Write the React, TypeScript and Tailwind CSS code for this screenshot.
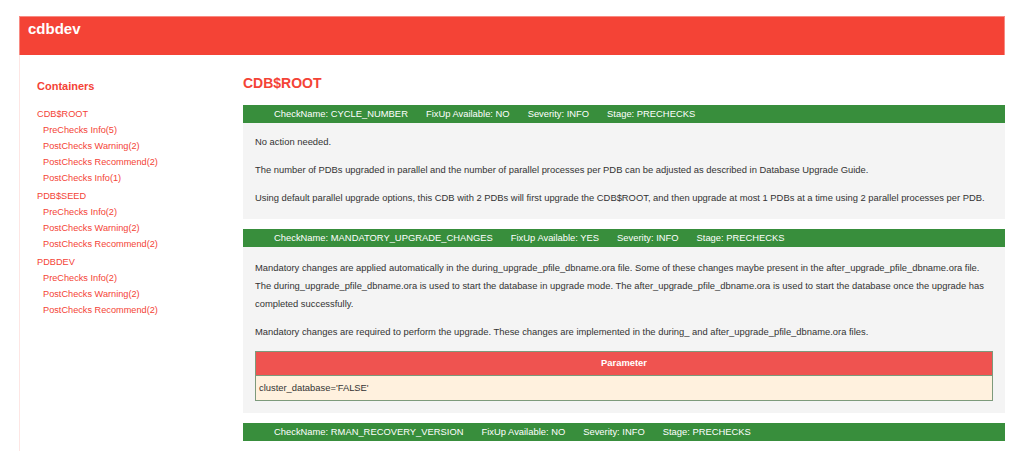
import React from 'react'

type Check = {
  name: string
  fixup: string
  severity: string
  stage: string
  paragraphs?: string[]
  params?: string[]
}

const checks: Check[] = [
  {
    name: 'CYCLE_NUMBER',
    fixup: 'NO',
    severity: 'INFO',
    stage: 'PRECHECKS',
    paragraphs: [
      'No action needed.',
      'The number of PDBs upgraded in parallel and the number of parallel processes per PDB can be adjusted as described in Database Upgrade Guide.',
      'Using default parallel upgrade options, this CDB with 2 PDBs will first upgrade the CDB$ROOT, and then upgrade at most 1 PDBs at a time using 2 parallel processes per PDB.',
    ],
  },
  {
    name: 'MANDATORY_UPGRADE_CHANGES',
    fixup: 'YES',
    severity: 'INFO',
    stage: 'PRECHECKS',
    paragraphs: [
      'Mandatory changes are applied automatically in the during_upgrade_pfile_dbname.ora file. Some of these changes maybe present in the after_upgrade_pfile_dbname.ora file. The during_upgrade_pfile_dbname.ora is used to start the database in upgrade mode. The after_upgrade_pfile_dbname.ora is used to start the database once the upgrade has completed successfully.',
      'Mandatory changes are required to perform the upgrade. These changes are implemented in the during_ and after_upgrade_pfile_dbname.ora files.',
    ],
    params: ["cluster_database='FALSE'"],
  },
  {
    name: 'RMAN_RECOVERY_VERSION',
    fixup: 'NO',
    severity: 'INFO',
    stage: 'PRECHECKS',
  },
]

const containers = [
  { name: 'CDB$ROOT', items: ['PreChecks Info(5)', 'PostChecks Warning(2)', 'PostChecks Recommend(2)', 'PostChecks Info(1)'] },
  { name: 'PDB$SEED', items: ['PreChecks Info(2)', 'PostChecks Warning(2)', 'PostChecks Recommend(2)'] },
  { name: 'PDBDEV', items: ['PreChecks Info(2)', 'PostChecks Warning(2)', 'PostChecks Recommend(2)'] },
]

function CheckCard({ check }: { check: Check }) {
  const hasTable = !!check.params
  return (
    <div className="mb-[10px]">
      {/* green title bar */}
      <div className="h-[18px] bg-[#388e3c] text-white text-[9.4px] flex items-center gap-[18px] pl-[31px]">
        <span>CheckName: {check.name}</span>
        <span>FixUp Available: {check.fixup}</span>
        <span>Severity: {check.severity}</span>
        <span>Stage: {check.stage}</span>
      </div>
      {check.paragraphs && (
        <div className={`bg-[#f4f4f4] px-[12px] text-[9.4px] text-[#333] ${hasTable ? 'pt-[12px] pb-[12px]' : 'pt-[10px] pb-[12px]'}`}>
          {check.paragraphs.map((p, i) => (
            <p key={i} className={`leading-[18px] ${i < check.paragraphs!.length - 1 || hasTable ? 'mb-[10px]' : ''}`}>
              {p}
            </p>
          ))}
          {hasTable && (
            <table className="w-full border-collapse border border-[#7d9a7b]">
              <thead>
                <tr>
                  <th className="h-[24px] bg-[#ef5350] text-white font-bold text-center border border-[#7d9a7b]">Parameter</th>
                </tr>
              </thead>
              <tbody>
                {check.params!.map((prm) => (
                  <tr key={prm}>
                    <td className="h-[25px] bg-[#fff1de] px-[3px] text-left border border-[#7d9a7b]">{prm}</td>
                  </tr>
                ))}
              </tbody>
            </table>
          )}
        </div>
      )}
    </div>
  )
}

export default function App() {
  return (
    <div className="w-[1024px] h-[460px] overflow-hidden bg-white pt-[16px] px-[19px]" style={{ fontFamily: '"Liberation Sans", Arial, sans-serif' }}>
      {/* header */}
      <div className="h-[39px] bg-[#f44336] pl-[8px] pt-[3px] border-x border-t border-[#f88a82]">
        <h1 className="text-white font-bold text-[15px] leading-[18px]">cdbdev</h1>
      </div>

      <div className="flex border-l border-[#fde6e4]">
        {/* sidebar */}
        <div className="w-[223px] shrink-0 pl-[17px] pt-[24px]">
          <h3 className="text-[#f44336] font-bold text-[11px] leading-[14px] mb-[13px]">Containers</h3>
          {containers.map((c) => (
            <div key={c.name} className="mb-[2px]">
              <div className="text-[#f44336] text-[9.2px] leading-[16px]">{c.name}</div>
              {c.items.map((it) => (
                <div key={it} className="text-[#f44336] text-[9.2px] leading-[16px] pl-[6px]">
                  {it}
                </div>
              ))}
            </div>
          ))}
        </div>

        {/* main */}
        <div className="flex-1 pt-[18px]">
          <h2 className="text-[#f44336] font-bold text-[14px] leading-[20px] mb-[12px]">CDB$ROOT</h2>
          {checks.map((c) => (
            <CheckCard key={c.name} check={c} />
          ))}
        </div>
      </div>
    </div>
  )
}
